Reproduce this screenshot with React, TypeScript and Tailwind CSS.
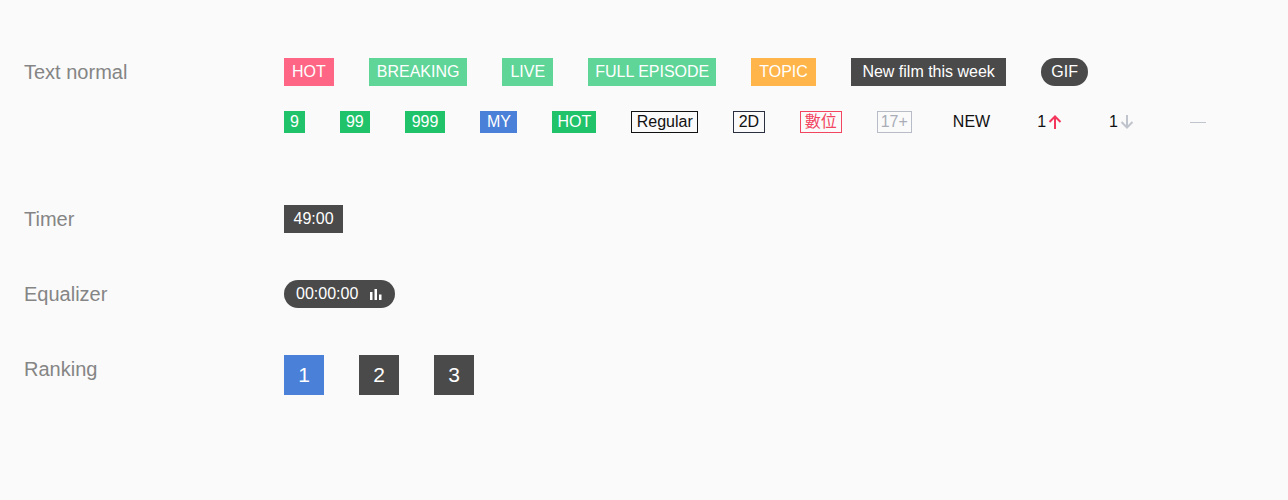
import React from "react";

const Label = ({ children }: { children: React.ReactNode }) => (
  <div className="w-[260px] shrink-0 text-[20px] leading-[28px] text-[#858585]">{children}</div>
);

const ArrowUp = ({ color }: { color: string }) => (
  <svg width="14" height="14" viewBox="0 0 14 14" fill="none" stroke={color} strokeWidth="2" strokeLinecap="butt" strokeLinejoin="miter">
    <path d="M7 1.5V14" />
    <path d="M1.5 7L7 1.5L12.5 7" />
  </svg>
);

const ArrowDown = ({ color }: { color: string }) => (
  <svg width="14" height="14" viewBox="0 0 14 14" fill="none" stroke={color} strokeWidth="2" strokeLinecap="butt" strokeLinejoin="miter">
    <path d="M7 0V12.5" />
    <path d="M1.5 7L7 12.5L12.5 7" />
  </svg>
);

export default function App() {
  return (
    <div className="min-h-[500px] bg-[#fafafa] px-6 pt-[58px] font-['Liberation_Sans',Arial,'Noto_Sans_CJK_TC',sans-serif]">
      {/* Text normal */}
      <div className="flex">
        <Label>Text normal</Label>
        <div className="flex flex-col gap-[25px]">
          <div className="flex gap-[35px] text-[16px] leading-[28px] text-white">
            <span className="bg-[#ff6685] px-2">HOT</span>
            <span className="bg-[#5fd598] px-2">BREAKING</span>
            <span className="bg-[#5fd598] px-2">LIVE</span>
            <span className="bg-[#5fd598] px-[7px]">FULL EPISODE</span>
            <span className="bg-[#ffb54a] px-2">TOPIC</span>
            <span className="bg-[#4a4a4a] px-[11.5px]">New film this week</span>
            <span className="rounded-full bg-[#4a4a4a] px-2.5">GIF</span>
          </div>
          <div className="flex items-center gap-[35px] text-[16px] leading-[22px]">
            <span className="bg-[#20c26a] px-1.5 text-white">9</span>
            <span className="bg-[#20c26a] px-1.5 text-white">99</span>
            <span className="bg-[#20c26a] px-[7px] text-white">999</span>
            <span className="bg-[#4a80d8] px-[6.5px] text-white">MY</span>
            <span className="bg-[#20c26a] px-[5px] text-white">HOT</span>
            <span className="border border-[#111] px-[4.5px] leading-[20px] text-[#111]">Regular</span>
            <span className="border border-[#2a3040] px-[4.5px] leading-[20px] text-[#111]">2D</span>
            <span className="border border-[#f2455f] px-1 leading-[20px] text-[#f2455f]">數位</span>
            <span className="border border-[#b8bcc6] px-[3px] leading-[20px] text-[#a9adb8]">17+</span>
            <span className="px-1.5 text-[#111]">NEW</span>
            <span className="flex items-center gap-[2px] px-1.5 text-[#111]">
              1
              <ArrowUp color="#f5365c" />
            </span>
            <span className="flex items-center gap-[2px] px-1.5 text-[#111]">
              1
              <ArrowDown color="#c0c4cc" />
            </span>
            <span className="ml-[15px] flex h-[22px] items-center">
              <span className="block h-[1px] w-4 bg-[#c0c4cc]" />
            </span>
          </div>
        </div>
      </div>

      {/* Timer */}
      <div className="mt-[72px] flex">
        <Label>Timer</Label>
        <div className="flex">
          <span className="bg-[#4a4a4a] px-[9.5px] text-[16px] leading-[28px] text-white">49:00</span>
        </div>
      </div>

      {/* Equalizer */}
      <div className="mt-[47px] flex">
        <Label>Equalizer</Label>
        <div className="flex">
          <span className="flex h-7 items-center gap-3 rounded-full bg-[#4a4a4a] pl-3 pr-[12.5px] text-[16px] text-white">
            00:00:00
            <svg width="12" height="11" viewBox="0 0 12 11" fill="#fff">
              <rect x="0" y="3" width="2.5" height="8" />
              <rect x="4.5" y="0" width="2.5" height="11" />
              <rect x="9" y="5.5" width="2.5" height="5.5" />
            </svg>
          </span>
        </div>
      </div>

      {/* Ranking */}
      <div className="mt-[47px] flex">
        <Label>Ranking</Label>
        <div className="flex gap-[35px] text-[21px] text-white">
          <span className="flex h-10 w-10 items-center justify-center bg-[#4a80d8]">1</span>
          <span className="flex h-10 w-10 items-center justify-center bg-[#4a4a4a]">2</span>
          <span className="flex h-10 w-10 items-center justify-center bg-[#4a4a4a]">3</span>
        </div>
      </div>
    </div>
  );
}
